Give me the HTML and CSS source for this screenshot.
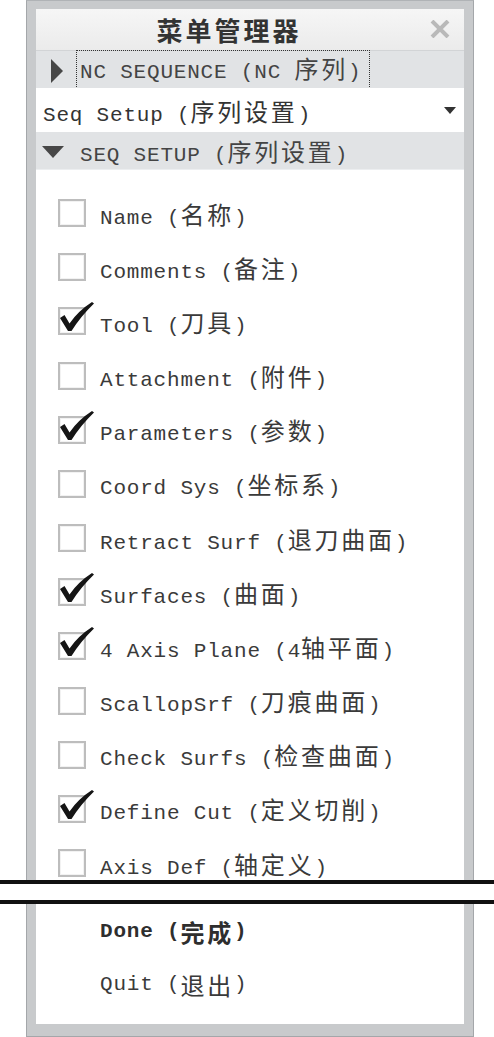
FILE: index.html
```html
<!DOCTYPE html>
<html lang="zh">
<head>
<meta charset="utf-8">
<title>菜单管理器</title>
<link rel="stylesheet" href="styles.css">
</head>
<body>
<div class="panel panel-top">
  <div class="titlebar">
    <div class="title">菜单管理器</div>
    <div class="close">
      <svg width="20" height="18" viewBox="0 0 20 18"><path d="M2 1 L18 17 M18 1 L2 17" stroke="#b9b9b9" stroke-width="4" fill="none"/></svg>
    </div>
  </div>
  <div class="row group">
    <span class="tri-right"></span>
    <span class="focus">NC SEQUENCE (NC <span class="cn">序列</span>)</span>
  </div>
  <div class="row select">
    <span class="sel-text">Seq Setup (<span class="cn">序列设置</span>)</span>
    <span class="caret"></span>
  </div>
  <div class="row group group-open">
    <span class="tri-down"></span>
    <span>SEQ SETUP (<span class="cn">序列设置</span>)</span>
  </div>
  <ul class="list">
    <li class="item"><span class="box"></span><span>Name (<span class="cn">名称</span>)</span></li>
    <li class="item"><span class="box"></span><span>Comments (<span class="cn">备注</span>)</span></li>
    <li class="item"><span class="box checked"><svg class="check" width="38" height="34" viewBox="0 -6 38 34"><path d="M2 11 L6.5 8 L11.5 16.5 Q20 4 34 -5 L36 -3.5 Q23 9 13.5 24 L10 24 Z" fill="#151515"/></svg></span><span>Tool (<span class="cn">刀具</span>)</span></li>
    <li class="item"><span class="box"></span><span>Attachment (<span class="cn">附件</span>)</span></li>
    <li class="item"><span class="box checked"><svg class="check" width="38" height="34" viewBox="0 -6 38 34"><path d="M2 11 L6.5 8 L11.5 16.5 Q20 4 34 -5 L36 -3.5 Q23 9 13.5 24 L10 24 Z" fill="#151515"/></svg></span><span>Parameters (<span class="cn">参数</span>)</span></li>
    <li class="item"><span class="box"></span><span>Coord Sys (<span class="cn">坐标系</span>)</span></li>
    <li class="item"><span class="box"></span><span>Retract Surf (<span class="cn">退刀曲面</span>)</span></li>
    <li class="item"><span class="box checked"><svg class="check" width="38" height="34" viewBox="0 -6 38 34"><path d="M2 11 L6.5 8 L11.5 16.5 Q20 4 34 -5 L36 -3.5 Q23 9 13.5 24 L10 24 Z" fill="#151515"/></svg></span><span>Surfaces (<span class="cn">曲面</span>)</span></li>
    <li class="item"><span class="box checked"><svg class="check" width="38" height="34" viewBox="0 -6 38 34"><path d="M2 11 L6.5 8 L11.5 16.5 Q20 4 34 -5 L36 -3.5 Q23 9 13.5 24 L10 24 Z" fill="#151515"/></svg></span><span>4 Axis Plane (4<span class="cn">轴平面</span>)</span></li>
    <li class="item"><span class="box"></span><span>ScallopSrf (<span class="cn">刀痕曲面</span>)</span></li>
    <li class="item"><span class="box"></span><span>Check Surfs (<span class="cn">检查曲面</span>)</span></li>
    <li class="item"><span class="box checked"><svg class="check" width="38" height="34" viewBox="0 -6 38 34"><path d="M2 11 L6.5 8 L11.5 16.5 Q20 4 34 -5 L36 -3.5 Q23 9 13.5 24 L10 24 Z" fill="#151515"/></svg></span><span>Define Cut (<span class="cn">定义切削</span>)</span></li>
    <li class="item"><span class="box"></span><span>Axis Def (<span class="cn">轴定义</span>)</span></li>
  </ul>
</div>
<div class="break"></div>
<div class="panel panel-bottom">
  <ul class="actions">
    <li class="action done">Done (<span class="cn">完成</span>)</li>
    <li class="action">Quit (<span class="cn">退出</span>)</li>
  </ul>
</div>
</body>
</html>
```

FILE: styles.css
```css
html, body {
  margin: 0;
  padding: 0;
  background: #ffffff;
}

body {
  width: 494px;
  font-family: "Liberation Mono", "Noto Sans CJK SC", monospace;
  font-size: 21px;
  letter-spacing: 0.8px;
  color: #3a3a3a;
}

.cn {
  font-family: "Noto Sans CJK SC", sans-serif;
  font-size: 24px;
  letter-spacing: 2.8px;
}

.panel {
  margin-left: 26px;
  width: 448px;
  box-sizing: border-box;
  background: #c8cacc;
  border-left: 1px solid #a4a7aa;
  border-right: 1px solid #a4a7aa;
  padding: 0 9px;
}

.panel-top {
  height: 880px;
  padding-top: 8px;
  border-top: 1px solid #b0b3b6;
  display: flex;
  flex-direction: column;
}

.titlebar {
  height: 42px;
  box-sizing: border-box;
  display: flex;
  align-items: center;
  background: linear-gradient(#f6f6f6, #ebebeb);
  border-bottom: 1px solid #d2d4d6;
}

.title {
  flex: 1;
  text-align: center;
  font-family: "Noto Sans CJK SC", sans-serif;
  font-weight: 700;
  font-size: 26px;
  letter-spacing: 3px;
  color: #333333;
  padding-left: 2px;
}

.close {
  width: 44px;
  display: flex;
  justify-content: flex-start;
  padding-left: 10px;
  box-sizing: border-box;
  align-items: center;
}

.row {
  display: flex;
  align-items: center;
  box-sizing: border-box;
}

.group {
  height: 37px;
  background: #e1e3e5;
  color: #444444;
  padding-left: 15px;
}

.group-open {
  height: 38px;
  padding-left: 6px;
  border-bottom: 1px solid #eceef0;
}

.tri-right {
  width: 0;
  height: 0;
  border-top: 12px solid transparent;
  border-bottom: 12px solid transparent;
  border-left: 12px solid #474747;
  margin-right: 14px;
  margin-top: 4px;
}

.tri-down {
  width: 0;
  height: 0;
  border-left: 11px solid transparent;
  border-right: 11px solid transparent;
  border-top: 12px solid #474747;
  margin-right: 16px;
  margin-top: 2px;
}

.focus {
  outline: 1px dotted #333333;
  outline-offset: 0;
  padding: 1px 8px 1px 3px;
  line-height: 32px;
  margin-top: 2px;
}

.select {
  height: 45px;
  background: #ffffff;
  padding-left: 7px;
  padding-right: 8px;
  justify-content: space-between;
  color: #333333;
}

.caret {
  width: 0;
  height: 0;
  border-left: 6.5px solid transparent;
  border-right: 6.5px solid transparent;
  border-top: 7px solid #333333;
}

.list {
  list-style: none;
  margin: 0;
  padding: 26px 0 0 22px;
  flex: 1;
  background: #ffffff;
  display: flex;
  flex-direction: column;
  gap: 20.17px;
}

.item {
  height: 34px;
  display: flex;
  align-items: center;
}

.box {
  position: relative;
  width: 28px;
  height: 28px;
  box-sizing: border-box;
  border: 2px solid #bdbdbd;
  box-shadow: inset 0 0 0 1px #f2f2f2;
  background: #ffffff;
  margin-right: 14px;
  flex-shrink: 0;
}

.check {
  position: absolute;
  left: -2px;
  top: -8px;
}

.break {
  height: 24px;
  box-sizing: border-box;
  border-top: 4px solid #111111;
  border-bottom: 4px solid #111111;
  background: #ffffff;
}

.panel-bottom {
  height: 133px;
  padding-bottom: 12px;
  border-bottom: 1px solid #a4a7aa;
}

.actions {
  list-style: none;
  margin: 0;
  height: 100%;
  box-sizing: border-box;
  padding: 10px 0 0 64px;
  background: #ffffff;
  display: flex;
  flex-direction: column;
  gap: 19px;
}

.action {
  height: 34px;
  display: flex;
  align-items: center;
  color: #3a3a3a;
}

.done {
  font-weight: 700;
  color: #2e2e2e;
}
```
